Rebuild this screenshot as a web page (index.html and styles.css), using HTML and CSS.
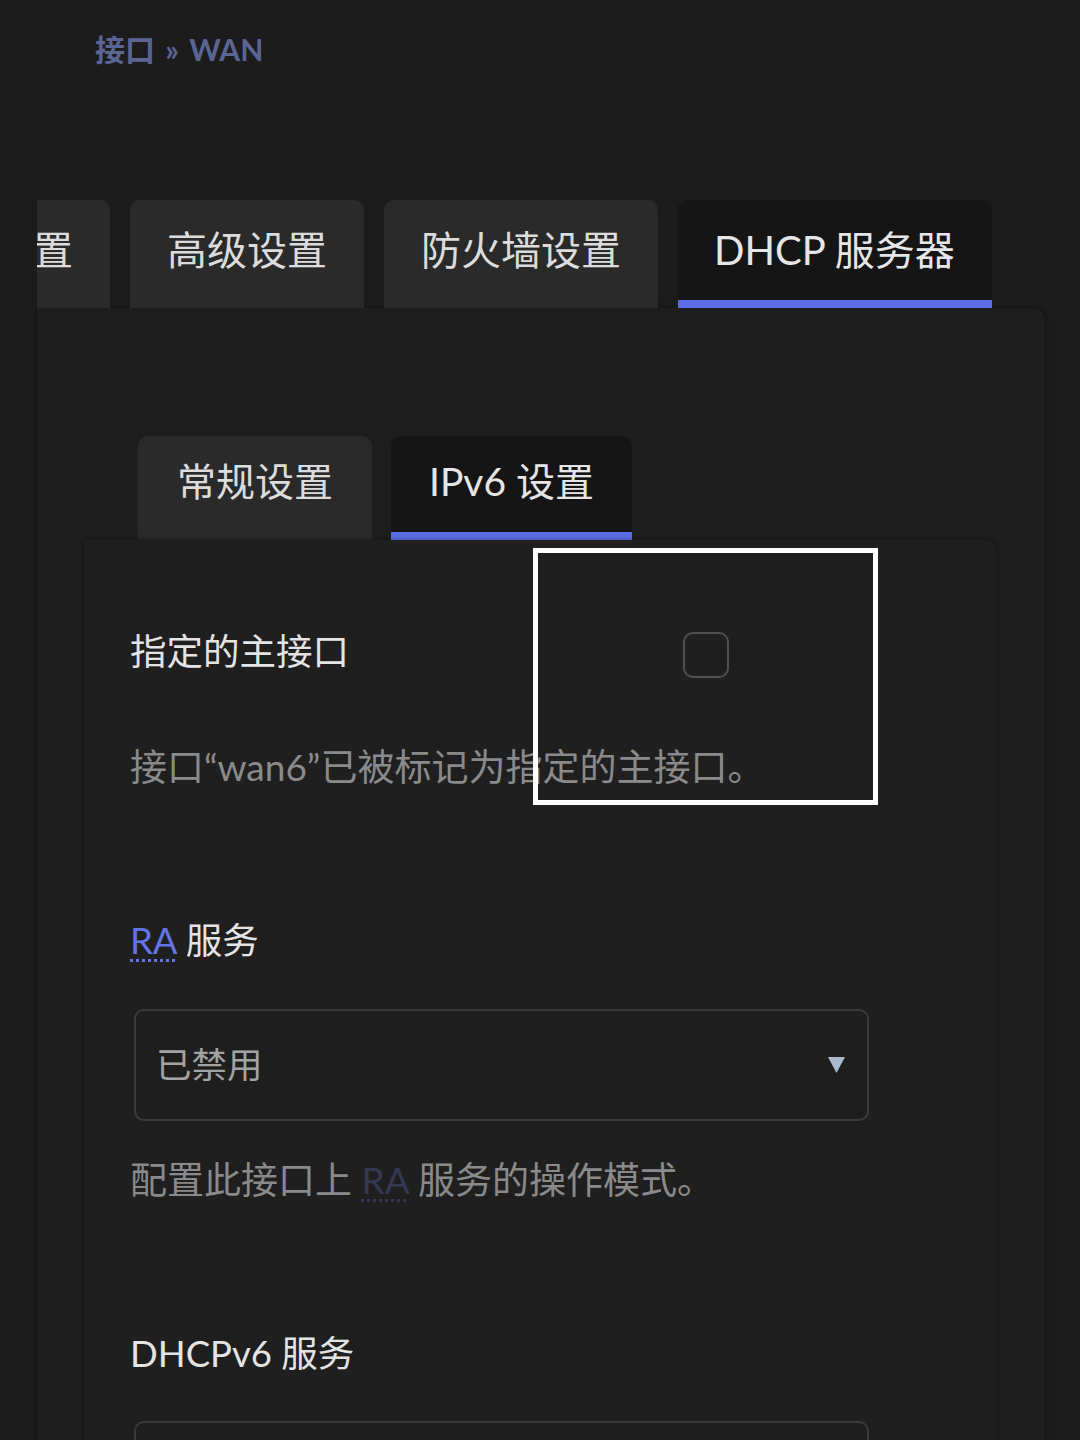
FILE: index.html
```html
<!DOCTYPE html>
<html lang="zh-CN">
<head>
<meta charset="utf-8">
<title>接口 » WAN</title>
<link rel="stylesheet" href="styles.css">
</head>
<body>
<div class="page">
  <h2 class="breadcrumb">接口 » WAN</h2>
  <div class="tabs">
    <div class="tab first">基本设置</div>
    <div class="tab">高级设置</div>
    <div class="tab">防火墙设置</div>
    <div class="tab active">DHCP 服务器</div>
  </div>
  <div class="card">
    <div class="subtabs">
      <div class="subtab">常规设置</div>
      <div class="subtab active">IPv6 设置</div>
    </div>
    <div class="subcard">
      <div class="field">
        <div class="row">
          <div class="label row-label">指定的主接口</div>
          <div class="value"><span class="checkbox"></span></div>
        </div>
        <div class="desc desc-first">接口“wan6”已被标记为指定的主接口。</div>
      </div>
      <div class="field">
        <div class="label"><abbr class="abbr">RA</abbr> 服务</div>
        <div class="select">
          <span class="select-text">已禁用</span>
          <svg class="arrow" width="17" height="16" viewBox="0 0 17 16"><polygon points="0,0 17,0 8.5,16" fill="#a9bacc"/></svg>
        </div>
        <div class="desc">配置此接口上 <abbr class="abbr dim">RA</abbr> 服务的操作模式。</div>
      </div>
      <div class="field">
        <div class="label">DHCPv6 服务</div>
        <div class="select last">
          <span class="select-text">已禁用</span>
          <svg class="arrow" width="17" height="16" viewBox="0 0 17 16"><polygon points="0,0 17,0 8.5,16" fill="#a9bacc"/></svg>
        </div>
      </div>
      <div class="focus-ring"></div>
    </div>
  </div>
</div>
</body>
</html>
```

FILE: styles.css
```css
* { box-sizing: border-box; }
html, body { margin: 0; padding: 0; }
body {
  background: #1c1c1c;
  font-family: "Lato", "Noto Sans CJK SC", sans-serif;
  color: #e2e2e2;
  overflow: hidden;
  height: 1440px;
}
.page {
  padding: 0 35px 0 37px;
}
.breadcrumb {
  margin: 0 0 131px 0;
  padding: 29px 0 0 58px;
  font-size: 30px;
  line-height: 40px;
  font-weight: 700;
  word-spacing: 3px;
  color: #5b6594;
}
.tabs {
  display: flex;
  gap: 20px;
  overflow: hidden;
  height: 108px;
}
.tab {
  flex: none;
  height: 108px;
  padding: 0 37px 8px;
  line-height: 100px;
  font-size: 40px;
  color: #dcdcdc;
  background: #2a2a2a;
  border-radius: 10px 10px 0 0;
  white-space: nowrap;
}
.tab.first {
  margin-left: -161px;
}
.tab.active {
  background: #151515;
  border-bottom: 8px solid #5b6de3;
  padding: 0 37px 0 36px;
  color: #e6e6e6;
}
.card {
  background: #1e1e1e;
  padding: 128px 48px 0 47px;
  border-radius: 0 12px 0 0;
  box-shadow: 0 0 5px rgba(0, 0, 0, 0.45);
  min-height: 1200px;
}
.subtabs {
  display: flex;
  gap: 19px;
  margin-left: 54px;
  height: 104px;
}
.subtab {
  flex: none;
  height: 104px;
  padding: 0 39px 8px;
  line-height: 90px;
  font-size: 39px;
  color: #dcdcdc;
  background: #2a2a2a;
  border-radius: 10px 10px 0 0;
  white-space: nowrap;
}
.subtab.active {
  background: #151515;
  border-bottom: 8px solid #5b6de3;
  padding: 0 38px;
  color: #e6e6e6;
}
.subcard {
  position: relative;
  background: #1f1f1f;
  padding: 86px 46px 0;
  border-radius: 0 12px 0 0;
  box-shadow: 0 0 5px rgba(0, 0, 0, 0.35);
  min-height: 1000px;
}
.field + .field {
  margin-top: 123px;
}
.row {
  display: flex;
  align-items: center;
  height: 50px;
}
.label {
  font-size: 36.5px;
  line-height: 50px;
  color: #e4e4e4;
  white-space: nowrap;
}
.row-label {
  width: 405px;
}
.value {
  width: 342px;
  display: flex;
  justify-content: center;
}
.checkbox {
  display: block;
  width: 46px;
  height: 46px;
  margin-top: 8px;
  border: 2px solid #4f4f4f;
  border-radius: 10px;
}
.desc {
  margin-top: 34px;
  font-size: 37px;
  line-height: 50px;
  color: #8a8a8a;
  white-space: nowrap;
}
.desc-first {
  margin-top: 66px;
}
.abbr {
  color: #6474e6;
  text-decoration: underline dotted;
  text-decoration-thickness: 3px;
  text-underline-offset: 5px;
}
.abbr.dim {
  color: #343852;
}
.select {
  margin: 44px 0 0 4px;
  width: 735px;
  height: 112px;
  border: 2px solid #3b3b3b;
  border-radius: 10px;
  background: #1e1e1e;
  display: flex;
  align-items: center;
  justify-content: space-between;
  padding: 0 22px 6px 20px;
}
.select.last {
  margin-top: 43px;
}
.select-text {
  font-size: 35.5px;
  color: #a3a3a3;
}
.arrow {
  display: block;
  margin-top: 6px;
}
.focus-ring {
  position: absolute;
  left: 449px;
  top: 8px;
  width: 345px;
  height: 257px;
  border: 5px solid #ffffff;
  pointer-events: none;
}
```
